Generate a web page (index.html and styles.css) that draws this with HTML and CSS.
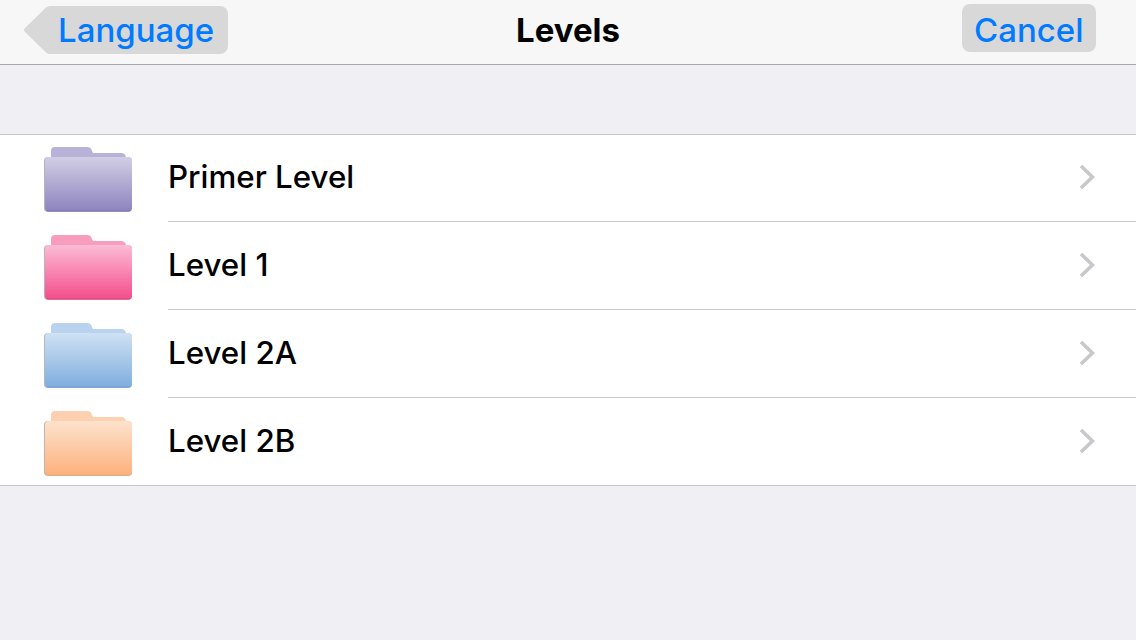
FILE: index.html
```html
<!DOCTYPE html>
<html lang="en">
<head>
    <meta charset="UTF-8">
    <meta name="viewport" content="width=device-width, initial-scale=1.0">
    <title>Levels</title>
    <link rel="stylesheet" href="styles.css">
</head>
<body>
    <svg class="defs" width="0" height="0" aria-hidden="true">
        <defs>
            <linearGradient id="purpleFront" x1="0" y1="0" x2="0" y2="1">
                <stop offset="0" stop-color="#d2cee4"/>
                <stop offset="0.97" stop-color="#8f86c0"/>
                <stop offset="1" stop-color="#7468b4"/>
            </linearGradient>
            <linearGradient id="pinkFront" x1="0" y1="0" x2="0" y2="1">
                <stop offset="0" stop-color="#fbbcd4"/>
                <stop offset="0.97" stop-color="#f4508e"/>
                <stop offset="1" stop-color="#e8306f"/>
            </linearGradient>
            <linearGradient id="blueFront" x1="0" y1="0" x2="0" y2="1">
                <stop offset="0" stop-color="#d0e1f3"/>
                <stop offset="0.97" stop-color="#80afdf"/>
                <stop offset="1" stop-color="#5f98d6"/>
            </linearGradient>
            <linearGradient id="orangeFront" x1="0" y1="0" x2="0" y2="1">
                <stop offset="0" stop-color="#fde2cd"/>
                <stop offset="0.97" stop-color="#fdb27e"/>
                <stop offset="1" stop-color="#fca76c"/>
            </linearGradient>
            <symbol id="chevron" viewBox="0 0 16 26">
                <path d="M2 2 L13.500 13 L2 24" fill="none" stroke="#c7c7cc" stroke-width="3.6"/>
            </symbol>
        </defs>
    </svg>

    <header class="nav-bar">
        <a class="back-btn" href="#">
            <svg class="back-arrow" width="28" height="48" viewBox="0 0 28 48">
                <path d="M28 0 L26 0 Q24 0 22 1.500 L1 22 Q-1 24 1 26 L22 46.500 Q24 48 26 48 L28 48 Z" fill="#d8d8d9"/>
            </svg>
            <span class="back-label">Language</span>
        </a>
        <h1 class="nav-title">Levels</h1>
        <a class="cancel-btn" href="#">Cancel</a>
    </header>

    <ul class="level-list">
        <li class="level-row">
            <svg class="folder" width="90" height="68" viewBox="0 0 90 68">
                <path d="M7 10 V4 Q7 0 11 0 H43 Q47 0 48 4 L49 6 H77 Q81 6 82 10 Z" fill="#b9b2d8"/>
                <rect x="0" y="10" width="88" height="55" rx="4" fill="#b4b3bd"/>
                <rect x="1" y="10" width="87" height="54.500" rx="4" fill="url(#purpleFront)"/>
            </svg>
            <div class="row-body">
                <span class="row-title">Primer Level</span>
                <svg class="chevron" width="16" height="26"><use href="#chevron"/></svg>
            </div>
        </li>
        <li class="level-row">
            <svg class="folder" width="90" height="68" viewBox="0 0 90 68">
                <path d="M7 10 V4 Q7 0 11 0 H43 Q47 0 48 4 L49 6 H77 Q81 6 82 10 Z" fill="#f99dbf"/>
                <rect x="0" y="10" width="88" height="55" rx="4" fill="#bdb2b7"/>
                <rect x="1" y="10" width="87" height="54.500" rx="4" fill="url(#pinkFront)"/>
            </svg>
            <div class="row-body">
                <span class="row-title">Level 1</span>
                <svg class="chevron" width="16" height="26"><use href="#chevron"/></svg>
            </div>
        </li>
        <li class="level-row">
            <svg class="folder" width="90" height="68" viewBox="0 0 90 68">
                <path d="M7 10 V4 Q7 0 11 0 H43 Q47 0 48 4 L49 6 H77 Q81 6 82 10 Z" fill="#b9d3ee"/>
                <rect x="0" y="10" width="88" height="55" rx="4" fill="#b0b7bd"/>
                <rect x="1" y="10" width="87" height="54.500" rx="4" fill="url(#blueFront)"/>
            </svg>
            <div class="row-body">
                <span class="row-title">Level 2A</span>
                <svg class="chevron" width="16" height="26"><use href="#chevron"/></svg>
            </div>
        </li>
        <li class="level-row">
            <svg class="folder" width="90" height="68" viewBox="0 0 90 68">
                <path d="M7 10 V4 Q7 0 11 0 H43 Q47 0 48 4 L49 6 H77 Q81 6 82 10 Z" fill="#fdd0b0"/>
                <rect x="0" y="10" width="88" height="55" rx="4" fill="#bfb6b0"/>
                <rect x="1" y="10" width="87" height="54.500" rx="4" fill="url(#orangeFront)"/>
            </svg>
            <div class="row-body">
                <span class="row-title">Level 2B</span>
                <svg class="chevron" width="16" height="26"><use href="#chevron"/></svg>
            </div>
        </li>
    </ul>
</body>
</html>
```

FILE: styles.css
```css
body {
    font-family: Inter, "Noto Sans", sans-serif;
    margin: 0;
    padding: 0;
    background-color: #efeff4;
    min-height: 100vh;
}

.defs {
    display: block;
    height: 0;
}

.nav-bar {
    height: 64px;
    background-color: #f7f7f7;
    border-bottom: 1px solid #a7a7aa;
    display: grid;
    grid-template-columns: 1fr auto 1fr;
    align-items: start;
    padding: 0 40px;
}

.back-btn {
    display: flex;
    justify-self: start;
    margin-top: 6px;
    margin-left: -16px;
    text-decoration: none;
}

.back-arrow {
    display: block;
}

.back-label {
    height: 48px;
    line-height: 48px;
    background-color: #d8d8d9;
    border-radius: 0 8px 8px 0;
    padding: 0 14px 0 6px;
    color: #007aff;
    font-size: 33px;
    font-weight: 500;
}

.nav-title {
    margin: 0;
    line-height: 60px;
    font-size: 33px;
    font-weight: 700;
    color: #000;
}

.cancel-btn {
    justify-self: end;
    margin-top: 4px;
    height: 48px;
    line-height: 52px;
    background-color: #d8d8d9;
    border-radius: 8px;
    padding: 0 12.5px 0 11.5px;
    color: #007aff;
    font-size: 33px;
    font-weight: 500;
    text-decoration: none;
}

.level-list {
    list-style: none;
    margin: 69px 0 0;
    padding: 0;
    background: white;
    border-top: 1px solid #c8c7cc;
    border-bottom: 1px solid #c8c7cc;
}

.level-row {
    display: flex;
    height: 88px;
    padding-left: 44px;
}

.level-row:first-child {
    margin-top: -1px;
}

.level-row:last-child {
    height: 87px;
}

.folder {
    flex-shrink: 0;
    margin-top: 13px;
    margin-right: 34px;
}

.row-body {
    flex-grow: 1;
    display: flex;
    align-items: center;
    justify-content: space-between;
    padding: 0 41px 1px 0;
    border-bottom: 1px solid #c8c7cc;
}

.level-row:last-child .row-body {
    border-bottom: none;
    padding-bottom: 2px;
}

.row-title {
    font-size: 31.3px;
    font-weight: 500;
    color: #000;
}
```
